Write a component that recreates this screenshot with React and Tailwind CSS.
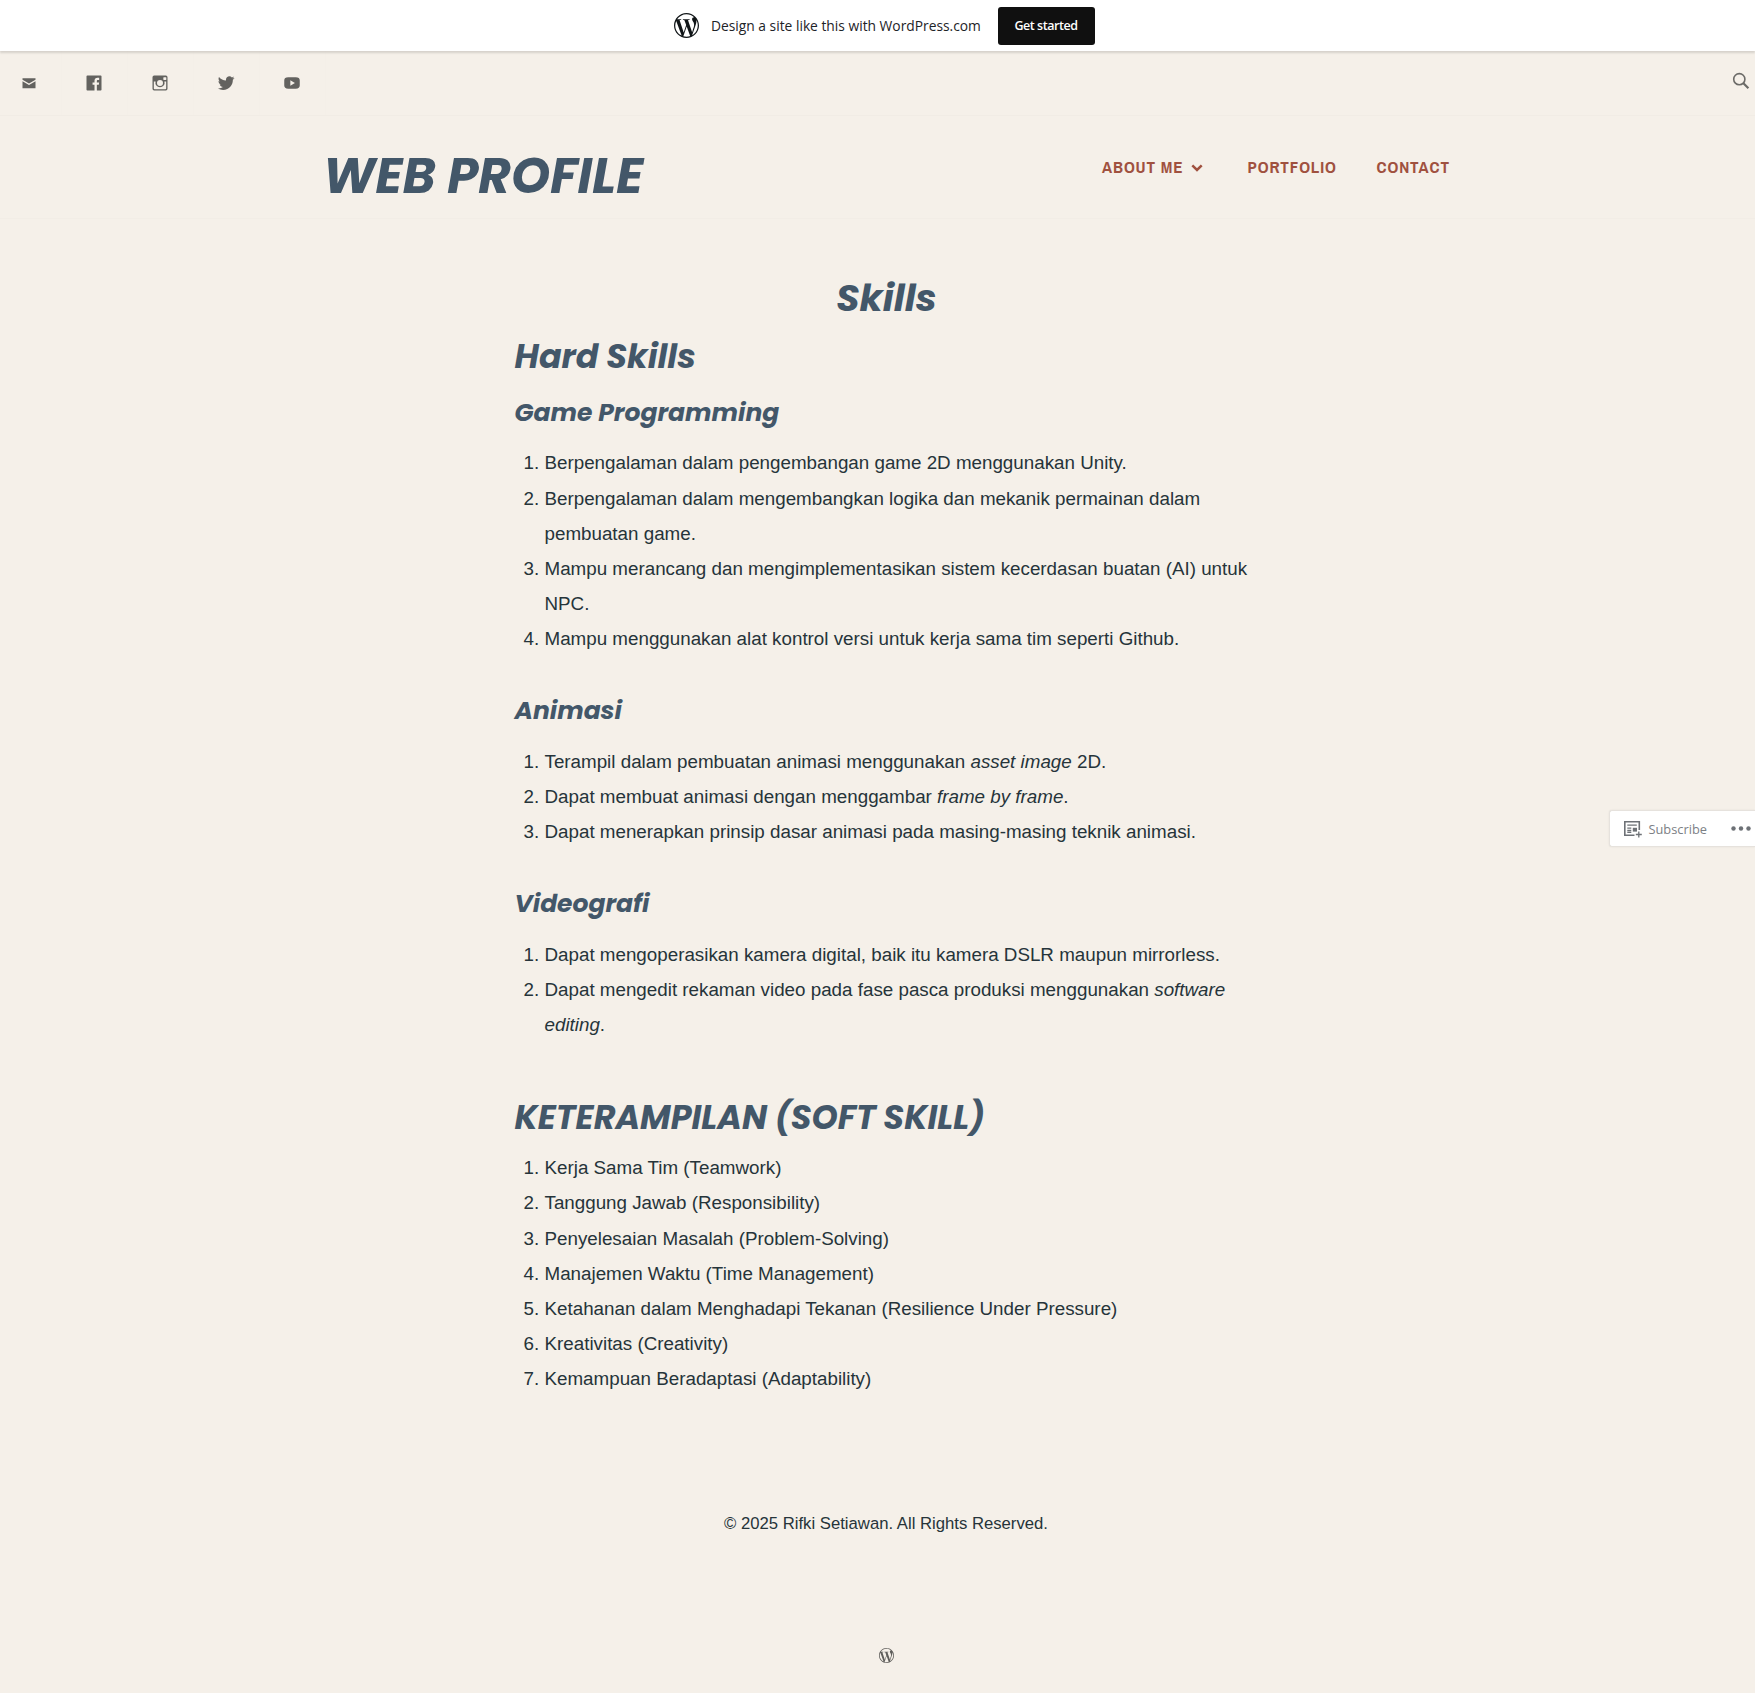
import React from "react";

const heading = "font-['Poppins','Inter',sans-serif] font-bold italic text-[#435769]";

const SOCIAL = [
  {
    label: "Mail",
    body: <path d="M4.200 6.300h15.600v1.700L12 12.700 4.200 8V6.300zM4.200 9.800L12 14.500l7.800-4.700v8.400H4.200z" />,
  },
  {
    label: "Facebook",
    body: (
      <path d="M20.007,3H3.993C3.445,3,3,3.445,3,3.993v16.013C3,20.555,3.445,21,3.993,21h8.621v-6.971h-2.346v-2.717h2.346V9.31c0-2.325,1.42-3.591,3.494-3.591c0.993,0,1.847,0.074,2.096,0.107v2.43l-1.438,0.001c-1.128,0-1.346,0.536-1.346,1.323v1.734h2.69l-0.35,2.717h-2.34V21h4.587C20.555,21,21,20.555,21,20.007V3.993C21,3.445,20.555,3,20.007,3z" />
    ),
  },
  {
    label: "Instagram",
    body: (
      <path
        fillRule="evenodd"
        d="M5 3h14a2 2 0 0 1 2 2v14a2 2 0 0 1-2 2H5a2 2 0 0 1-2-2V5a2 2 0 0 1 2-2zm11.6 2a.6.6 0 0 0-.6.6v2.3c0 .3.3.6.6.6H19c.3 0 .6-.3.6-.6V5.600a.6.6 0 0 0-.6-.6h-2.400zM4.600 10.200V18.600c0 .5.400.9.9.9h13c.5 0 .9-.400.9-.9v-8.400h-2.100a5.500 5.500 0 1 1-10.600 0H4.600zM12 8.300a3.600 3.600 0 1 0 0 7.200 3.600 3.600 0 0 0 0-7.200z"
      />
    ),
  },
  {
    label: "Twitter",
    body: (
      <path d="M22.23,5.924c-0.736,0.326-1.527,0.547-2.357,0.646c0.847-0.508,1.498-1.312,1.804-2.27c-0.793,0.47-1.671,0.812-2.606,0.996C18.324,4.498,17.257,4,16.077,4c-2.266,0-4.103,1.837-4.103,4.103c0,0.322,0.036,0.635,0.106,0.935C8.67,8.867,5.647,7.234,3.623,4.751C3.27,5.357,3.067,6.062,3.067,6.814c0,1.424,0.724,2.679,1.825,3.415c-0.673-0.021-1.305-0.206-1.859-0.513c0,0.017,0,0.034,0,0.052c0,1.988,1.414,3.647,3.292,4.023c-0.344,0.094-0.707,0.144-1.081,0.144c-0.264,0-0.521-0.026-0.772-0.074c0.522,1.63,2.038,2.816,3.833,2.85c-1.404,1.1-3.174,1.756-5.096,1.756c-0.331,0-0.658-0.019-0.979-0.057c1.816,1.164,3.973,1.843,6.29,1.843c7.547,0,11.675-6.252,11.675-11.675c0-0.178-0.004-0.355-0.012-0.531C20.985,7.47,21.68,6.747,22.23,5.924z" />
    ),
  },
  {
    label: "YouTube",
    body: (
      <path
        fillRule="evenodd"
        d="M7.500 5.200h9C19.800 5.200 21.300 6.500 21.300 9v6c0 2.500-1.500 3.800-4.800 3.800h-9C4.200 18.800 2.700 17.500 2.700 15V9c0-2.500 1.500-3.800 4.800-3.800zM10 8.700v6.600l5.500-3.300L10 8.700z"
      />
    ),
  },
];

function WordPressMark({ className }) {
  return (
    <svg viewBox="2 2 20 20" className={className} fill="currentColor">
      <path
        fillRule="evenodd"
        d="M12.158,12.786L9.46,20.625c0.806,0.237,1.657,0.366,2.54,0.366c1.047,0,2.051-0.181,2.986-0.51c-0.024-0.038-0.046-0.079-0.065-0.124L12.158,12.786z M3.009,12c0,3.559,2.068,6.634,5.067,8.092L3.788,8.341C3.289,9.459,3.009,10.696,3.009,12z M18.069,11.546c0-1.112-0.399-1.881-0.741-2.48c-0.456-0.741-0.883-1.368-0.883-2.109c0-0.826,0.627-1.596,1.51-1.596c0.04,0,0.078,0.005,0.116,0.007C16.472,3.904,14.34,3.009,12,3.009c-3.141,0-5.904,1.612-7.512,4.052c0.211,0.007,0.41,0.011,0.579,0.011c0.94,0,2.396-0.114,2.396-0.114C7.947,6.93,8.004,7.642,7.52,7.699c0,0-0.487,0.057-1.029,0.085l3.274,9.739l1.968-5.901l-1.401-3.838C9.848,7.756,9.389,7.699,9.389,7.699C8.904,7.67,8.961,6.93,9.446,6.958c0,0,1.484,0.114,2.368,0.114c0.94,0,2.397-0.114,2.397-0.114c0.485-0.028,0.542,0.684,0.057,0.741c0,0-0.488,0.057-1.029,0.085l3.249,9.665l0.897-2.996C17.841,13.284,18.069,12.316,18.069,11.546z M19.889,7.686c0.039,0.286,0.06,0.593,0.06,0.924c0,0.912-0.171,1.938-0.684,3.22l-2.746,7.94c2.673-1.558,4.47-4.454,4.47-7.771C20.991,10.436,20.591,8.967,19.889,7.686z M12,22C6.486,22,2,17.514,2,12C2,6.486,6.486,2,12,2c5.514,0,10,4.486,10,10C22,17.514,17.514,22,12,22z"
      />
    </svg>
  );
}

function List({ items }) {
  return (
    <ol className="list-decimal pl-[30px] text-[18.8px] leading-[35.2px] text-[#26343a]">
      {items.map((item, i) => (
        <li key={i}>{item}</li>
      ))}
    </ol>
  );
}

function Sub({ children }) {
  return <h3 className={`${heading} mb-[14.800px] text-[25px] leading-9`}>{children}</h3>;
}

export default function App() {
  return (
    <div className="relative h-[1693px] w-[1755px] overflow-hidden bg-[#f5f0e9] font-['Liberation_Sans',Arial,sans-serif] text-[#26343a]">
      <div className="relative flex h-[51px] items-center bg-white pl-[673.500px] font-['Open_Sans',sans-serif] shadow-[0_2px_2px_rgba(0,0,0,0.13)]">
        <WordPressMark className="size-[25px] text-[#101517]" />
        <span className="ml-[12.500px] mt-px w-[270.500px] whitespace-nowrap text-[13.8px] leading-5 text-[#1d2327]">
          Design a site like this with WordPress.com
        </span>
        <button className="ml-[16px] flex h-[38px] w-[97px] items-center justify-center whitespace-nowrap rounded-[3px] bg-[#101010] pt-0.5 text-[12.5px] font-semibold tracking-[-0.45px] text-white">
          Get started
        </button>
      </div>

      <div className="flex h-[65px] items-start justify-between border-b border-[#f1ece5]">
        <nav className="flex h-full">
          {SOCIAL.map((s, i) => (
            <a
              key={s.label}
              aria-label={s.label}
              className={`flex h-full items-start border-r border-[#f4efe8] pt-[21.500px] ${i === 0 ? "w-[62px] pl-[18.500px]" : "w-[66px] pl-[22px]"}`}
            >
              <svg viewBox="0 0 24 24" className="size-5 fill-[#63625f]">
                {s.body}
              </svg>
            </a>
          ))}
        </nav>
        <svg viewBox="0 0 18 18" className="mr-[5px] mt-[21px] size-[18px] fill-none stroke-[#6b6a67]">
          <circle cx="7.300" cy="7.200" r="5.600" strokeWidth="1.600" />
          <path d="M11.400 11.300l5 5" strokeWidth="2.200" />
        </svg>
      </div>

      <header className="flex h-[103px] items-start border-b border-[#f2ede6]">
        <h1 className={`${heading} ml-[323px] mt-[30px] w-[779px] whitespace-nowrap text-[50px] leading-[60px]`}>
          WEB PROFILE
        </h1>
        <nav className="mt-[39px] flex whitespace-nowrap font-['Archivo_Narrow','Roboto_Condensed',sans-serif] text-[17px] font-bold leading-6 tracking-[0.88px] text-[#a0513f]">
          <a className="flex w-[145.500px] items-center">
            ABOUT ME
            <svg viewBox="0 0 12 8" className="ml-[7.500px] mt-px h-2 w-3 fill-none stroke-current" strokeWidth="2.500">
              <path d="M1.300 1.300L6 5.900l4.700-4.600" />
            </svg>
          </a>
          <a className="w-[129px]">PORTFOLIO</a>
          <a>CONTACT</a>
        </nav>
      </header>

      <main className="ml-[514.500px] mt-[54px] w-[743px]">
        <h1 className={`${heading} pl-px text-center text-[37.5px] leading-[50px]`}>Skills</h1>
        <h2 className={`${heading} mb-[14.500px] mt-[11px] text-[33.4px] leading-[46px]`}>Hard Skills</h2>

        <Sub>Game Programming</Sub>
        <List
          items={[
            "Berpengalaman dalam pengembangan game 2D menggunakan Unity.",
            "Berpengalaman dalam mengembangkan logika dan mekanik permainan dalam pembuatan game.",
            "Mampu merancang dan mengimplementasikan sistem kecerdasan buatan (AI) untuk NPC.",
            "Mampu menggunakan alat kontrol versi untuk kerja sama tim seperti Github.",
          ]}
        />

        <div className="mt-[36.500px]">
          <Sub>Animasi</Sub>
          <List
            items={[
              <>Terampil dalam pembuatan animasi menggunakan <em>asset image</em> 2D.</>,
              <>Dapat membuat animasi dengan menggambar <em>frame by frame</em>.</>,
              "Dapat menerapkan prinsip dasar animasi pada masing-masing teknik animasi.",
            ]}
          />
        </div>

        <div className="mt-[36.300px]">
          <Sub>Videografi</Sub>
          <List
            items={[
              "Dapat mengoperasikan kamera digital, baik itu kamera DSLR maupun mirrorless.",
              <>Dapat mengedit rekaman video pada fase pasca produksi menggunakan <em>software editing</em>.</>,
            ]}
          />
        </div>

        <h2 className={`${heading} mb-[9px] mt-[53px] text-[33.4px] leading-[46px]`}>
          KETERAMPILAN (SOFT SKILL)
        </h2>
        <List
          items={[
            "Kerja Sama Tim (Teamwork)",
            "Tanggung Jawab (Responsibility)",
            "Penyelesaian Masalah (Problem-Solving)",
            "Manajemen Waktu (Time Management)",
            "Ketahanan dalam Menghadapi Tekanan (Resilience Under Pressure)",
            "Kreativitas (Creativity)",
            "Kemampuan Beradaptasi (Adaptability)",
          ]}
        />
      </main>

      <footer className="ml-[17px] flex flex-col items-center">
        <p className="mt-[111.500px] text-[16.7px] leading-8">© 2025 Rifki Setiawan. All Rights Reserved.</p>
        <WordPressMark className="mt-[108px] size-[15px] text-[#5f5e5b]" />
      </footer>

      <div className="absolute right-0 top-[810px] flex h-[37px] w-[146px] items-center rounded-l-[3px] border border-r-0 border-[#e6e2dd] bg-white pl-[13px] font-['Open_Sans',sans-serif] text-[#7c8085] shadow-[0_0_2px_rgba(0,0,0,0.08)]">
        <svg viewBox="0 0 20 20" className="size-[20px] shrink-0 fill-none stroke-[#6d7176]" strokeWidth="1.600">
          <path d="M16.300 11V2.700H1.800v13.600h9.700" />
          <path d="M4.300 6.200h9.500M4.300 9.200h4M4.300 11.500h4M4.300 13.400h4M15.800 12.500v6M12.800 15.500h6" strokeWidth="1.300" />
          <rect x="9.800" y="8.800" width="4.200" height="3.800" className="fill-[#6d7176]" stroke="none" />
        </svg>
        <span className="ml-[5.500px] mt-0.5 w-[58px] text-[12.8px]">Subscribe</span>
        <svg viewBox="0 0 20 5" className="ml-[24px] h-[5px] w-5 shrink-0 fill-[#6d7176]">
          <circle cx="2.500" cy="2.500" r="2.200" />
          <circle cx="10" cy="2.500" r="2.200" />
          <circle cx="17.500" cy="2.500" r="2.200" />
        </svg>
      </div>
    </div>
  );
}
